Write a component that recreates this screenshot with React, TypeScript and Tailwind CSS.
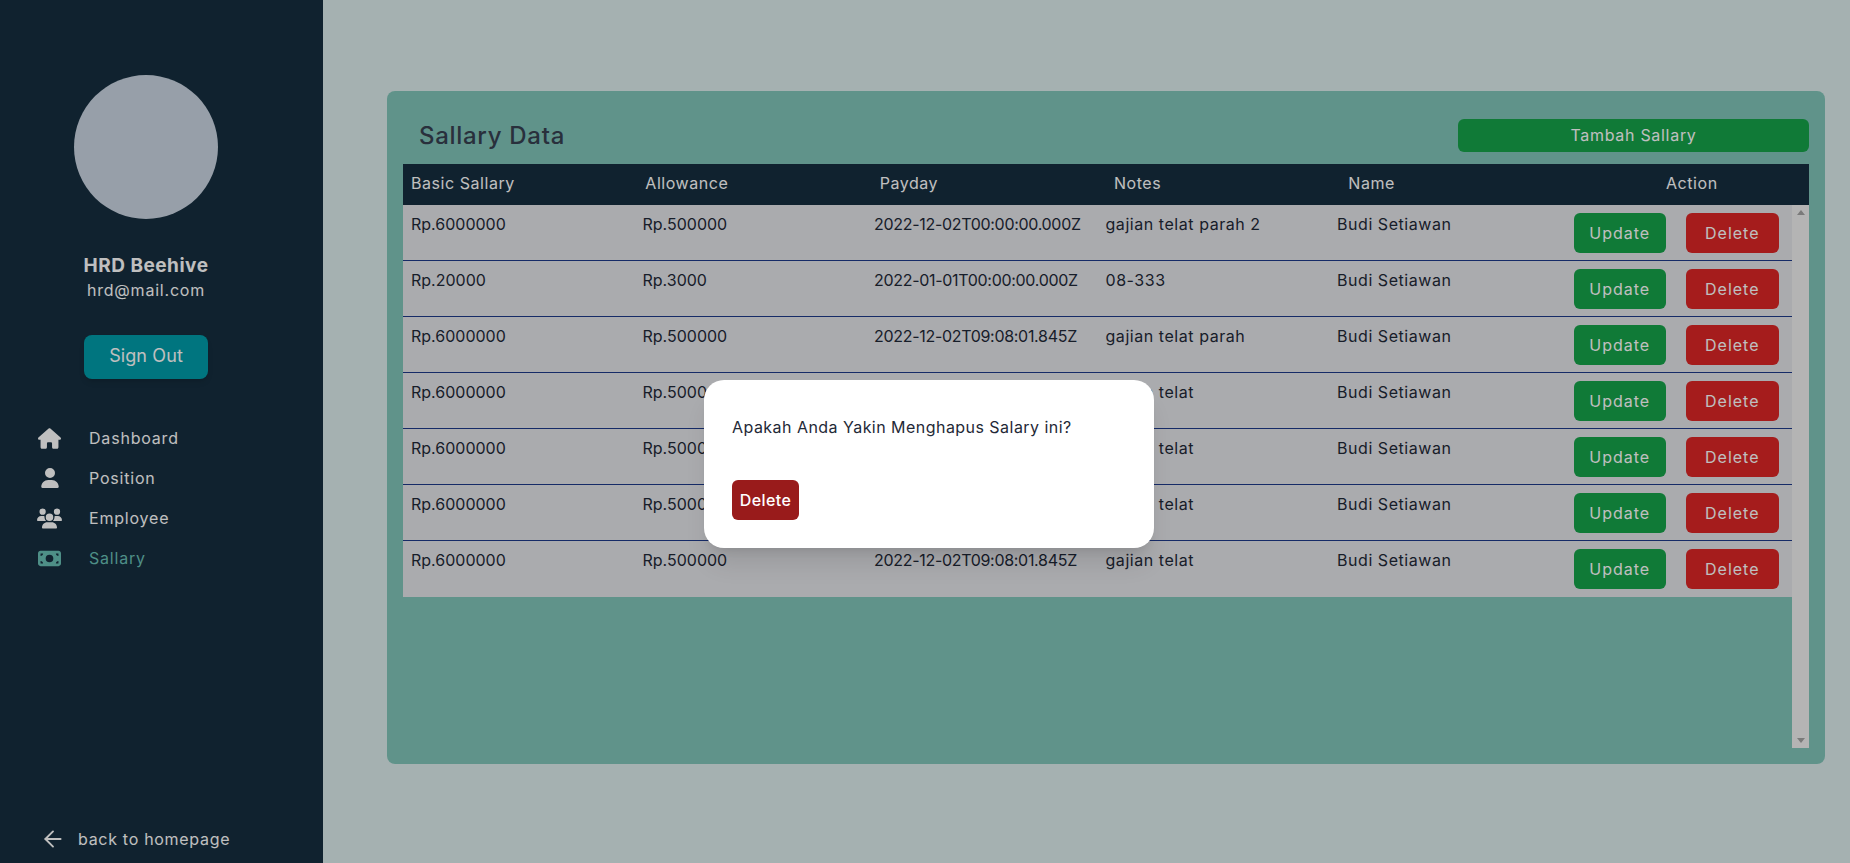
import { ArrowLeft } from "lucide-react";
import { FaHouse, FaUser, FaUsers, FaMoneyBill } from "react-icons/fa6";

const columns = ["Basic Sallary", "Allowance", "Payday", "Notes", "Name"];

const rows = [
  { basic: "Rp.6000000", allowance: "Rp.500000", payday: "2022-12-02T00:00:00.000Z", notes: "gajian telat parah 2" },
  { basic: "Rp.20000", allowance: "Rp.3000", payday: "2022-01-01T00:00:00.000Z", notes: "08-333" },
  { basic: "Rp.6000000", allowance: "Rp.500000", payday: "2022-12-02T09:08:01.845Z", notes: "gajian telat parah" },
  { basic: "Rp.6000000", allowance: "Rp.500000", payday: "2022-12-02T09:08:01.845Z", notes: "gajian telat" },
  { basic: "Rp.6000000", allowance: "Rp.500000", payday: "2022-12-02T09:08:01.845Z", notes: "gajian telat" },
  { basic: "Rp.6000000", allowance: "Rp.500000", payday: "2022-12-02T09:08:01.845Z", notes: "gajian telat" },
  { basic: "Rp.6000000", allowance: "Rp.500000", payday: "2022-12-02T09:08:01.845Z", notes: "gajian telat" },
];

const navItems = [
  { label: "Dashboard", icon: FaHouse, size: 23, active: false },
  { label: "Position", icon: FaUser, size: 20, active: false },
  { label: "Employee", icon: FaUsers, size: 25, active: false },
  { label: "Sallary", icon: FaMoneyBill, size: 23, active: true },
];

function Sidebar() {
  return (
    <aside className="flex h-full w-[323px] shrink-0 flex-col bg-[#162e3f] pt-[75px] text-white">
      <div className="flex w-[292px] flex-col items-center">
        <div className="h-36 w-36 rounded-full bg-slate-300" />
        <h2 className="mt-[33px] text-[19px] leading-7 font-bold tracking-[0.5px]">HRD Beehive</h2>
        <p className="-mt-0.5 text-base leading-6 tracking-[0.8px]">hrd@mail.com</p>
        <button className="mt-[33px] h-11 w-[124px] rounded-lg bg-[#009daa] pb-0.5 text-lg tracking-[0.1px] text-white shadow-md">Sign Out</button>
      </div>
      <nav className="mt-[47px] flex flex-col gap-4 pl-[37px]">
        {navItems.map(({ label, icon: Icon, size, active }) => (
          <a key={label} className={`flex h-6 items-center text-base tracking-[0.8px] ${active ? "text-[#69bfb5]" : "text-white"}`}>
            <span className="mr-[27px] flex w-[25px] shrink-0 justify-center">
              <Icon size={size} />
            </span>
            {label}
          </a>
        ))}
      </nav>
      <a className="mt-auto mb-[11px] flex items-center pl-[40px] text-base tracking-[0.7px]">
        <ArrowLeft size={26} strokeWidth={1.75} className="mr-[12px]" />
        back to homepage
      </a>
    </aside>
  );
}

function SalaryTable() {
  return (
    <div className="flex min-h-0 flex-1 flex-col">
      <div className="grid h-[41px] shrink-0 grid-cols-6 items-center bg-[#162e3f] pb-[3px] text-base tracking-[0.55px] text-white">
        {columns.map((column) => (
          <div key={column} className="px-2">{column}</div>
        ))}
        <div className="text-center">Action</div>
      </div>
      <div className="flex min-h-0 flex-1">
        <div className="flex-1">
          {rows.map((row, index) => (
            <div key={index} className="grid h-14 grid-cols-6 border-b border-[#1e3a8a] bg-[#e3e4e9] text-base text-[#1f2937] last:border-b-0">
              <div className="px-2 pt-[7px]">{row.basic}</div>
              <div className="px-2 pt-[7px]">{row.allowance}</div>
              <div className="px-2 pt-[7px] tracking-[-0.3px]">{row.payday}</div>
              <div className="px-2 pt-[7px] tracking-[0.55px]">{row.notes}</div>
              <div className="px-2 pt-[7px] tracking-[0.55px]">Budi Setiawan</div>
              <div className="flex justify-center gap-5 pt-2 tracking-[1px]">
                <button className="h-10 w-[92px] rounded-md bg-[#16a34a] pb-px text-white">Update</button>
                <button className="h-10 w-[93px] rounded-md bg-[#dc2626] pb-px text-white">Delete</button>
              </div>
            </div>
          ))}
        </div>
        <div className="flex w-[17px] shrink-0 flex-col items-center justify-between bg-[#f1f1f1] py-[5px]">
          <span className="h-0 w-0 border-x-[4px] border-b-[5px] border-x-transparent border-b-[#a3a3a3]" />
          <span className="h-0 w-0 border-x-[4px] border-t-[5px] border-x-transparent border-t-[#a3a3a3]" />
        </div>
      </div>
    </div>
  );
}

function DeleteDialog() {
  return (
    <div className="absolute inset-0 bg-black/25">
      <div className="absolute top-[380px] left-[704px] flex h-[168px] w-[450px] flex-col items-start rounded-[20px] bg-white px-7 pt-[35px] pb-7 shadow-xl">
        <p className="text-base leading-6 tracking-[0.46px] text-[#1f2937]">Apakah Anda Yakin Menghapus Salary ini?</p>
        <button className="mt-auto h-10 w-[67px] rounded-md bg-[#991b1b] pb-px text-base font-medium tracking-[0.4px] text-white">Delete</button>
      </div>
    </div>
  );
}

export default function App() {
  return (
    <div className="relative flex h-[863px] w-full overflow-hidden bg-[#dcecec] font-['Inter',sans-serif]">
      <Sidebar />
      <main className="flex-1 pt-[91px] pr-[25px] pb-[99px] pl-16">
        <div className="flex h-full flex-col rounded-lg bg-[#80c5b9] px-4 pt-7 pb-4">
          <div className="mb-3 flex h-[33px] items-center justify-between">
            <h1 className="pl-4 text-2xl font-medium tracking-[0.7px] text-[#374151]">Sallary Data</h1>
            <button className="h-[33px] w-[351px] rounded-md bg-[#16a34a] pb-px text-base tracking-[0.7px] text-white">Tambah Sallary</button>
          </div>
          <SalaryTable />
        </div>
      </main>
      <DeleteDialog />
    </div>
  );
}
